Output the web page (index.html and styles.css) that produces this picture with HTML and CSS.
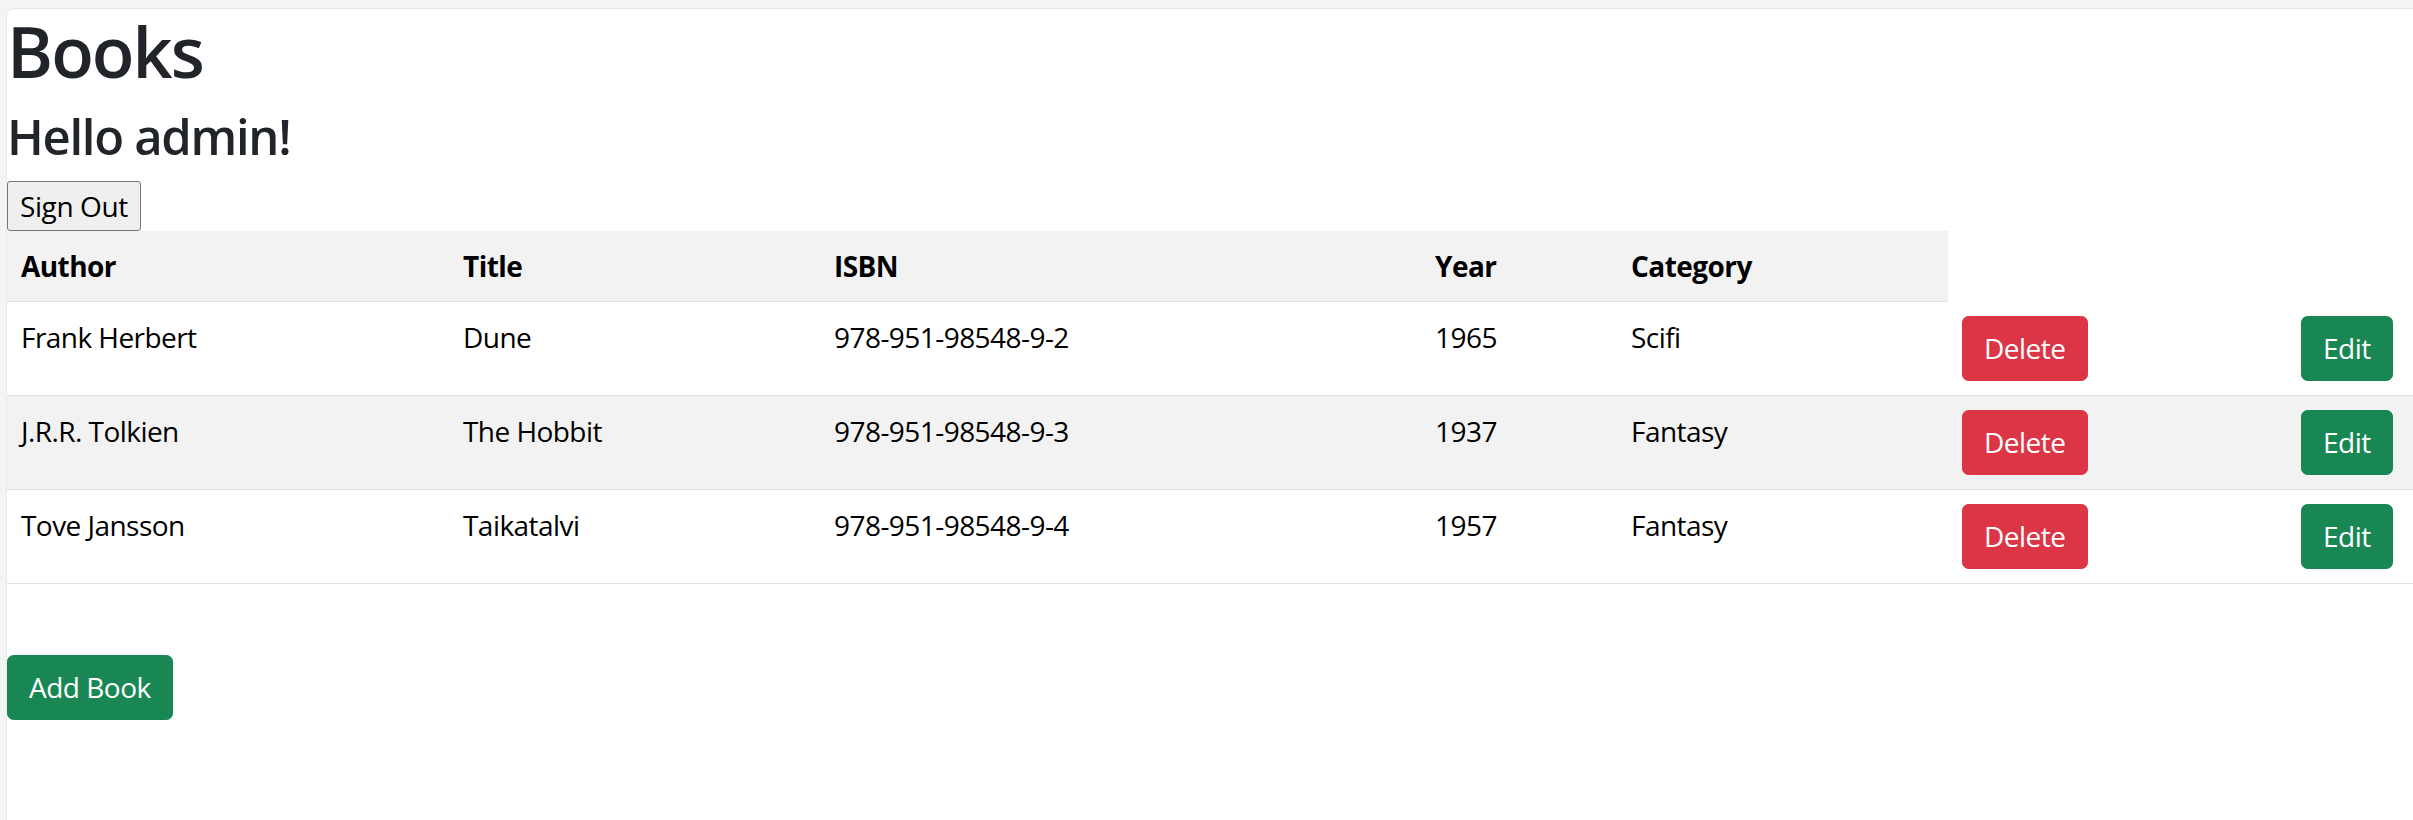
FILE: index.html
```html
<!DOCTYPE html>
<html lang="en">
<head>
<meta charset="utf-8">
<title>Books</title>
<link rel="stylesheet" href="styles.css">
</head>
<body>
<div class="window">
  <main class="page">
    <h1 class="title">Books</h1>
    <h3 class="greeting">Hello admin!</h3>
    <button class="signout">Sign Out</button>
    <table class="books">
      <colgroup>
        <col class="c-author">
        <col class="c-title">
        <col class="c-isbn">
        <col class="c-year">
        <col class="c-category">
        <col class="c-delete">
        <col class="c-edit">
      </colgroup>
      <tr class="head-row">
        <th>Author</th>
        <th>Title</th>
        <th>ISBN</th>
        <th>Year</th>
        <th>Category</th>
      </tr>
      <tr>
        <td>Frank Herbert</td>
        <td>Dune</td>
        <td>978-951-98548-9-2</td>
        <td>1965</td>
        <td>Scifi</td>
        <td><button class="btn btn-danger">Delete</button></td>
        <td><button class="btn btn-success">Edit</button></td>
      </tr>
      <tr class="striped">
        <td>J.R.R. Tolkien</td>
        <td>The Hobbit</td>
        <td>978-951-98548-9-3</td>
        <td>1937</td>
        <td>Fantasy</td>
        <td><button class="btn btn-danger">Delete</button></td>
        <td><button class="btn btn-success">Edit</button></td>
      </tr>
      <tr>
        <td>Tove Jansson</td>
        <td>Taikatalvi</td>
        <td>978-951-98548-9-4</td>
        <td>1957</td>
        <td>Fantasy</td>
        <td><button class="btn btn-danger">Delete</button></td>
        <td><button class="btn btn-success">Edit</button></td>
      </tr>
    </table>
    <div class="actions">
      <button class="btn btn-success">Add Book</button>
    </div>
  </main>
</div>
</body>
</html>
```

FILE: styles.css
```css
html, body {
  margin: 0;
  height: 100%;
}

body {
  background: #f4f4f4;
  font-family: "Open Sans", "Noto Sans", "Liberation Sans", sans-serif;
  font-size: 28px;
  line-height: 1.5;
  letter-spacing: -0.55px;
  color: #212529;
}

.window {
  box-sizing: border-box;
  height: 100%;
  padding: 8px 0 0 6px;
}

.page {
  box-sizing: border-box;
  height: 100%;
  background: #ffffff;
  border-top: 1px solid #e6e6e6;
  border-left: 1px solid #ebebeb;
  border-top-left-radius: 8px;
}

.title {
  margin: 0 0 14px;
  font-size: 70px;
  font-weight: 600;
  line-height: 84px;
  letter-spacing: -2px;
}

.greeting {
  margin: 0 0 15px;
  font-size: 49px;
  font-weight: 600;
  line-height: 59px;
  letter-spacing: -1.3px;
}

.signout {
  display: block;
  box-sizing: border-box;
  height: 50px;
  margin: 0;
  font-family: inherit;
  font-size: 28px;
  line-height: 42px;
  letter-spacing: -0.4px;
  padding: 0 12px;
  color: #000;
  background: #efefef;
  border: 1px solid #767676;
  border-radius: 3px;
}

.books {
  width: 100%;
  border-collapse: collapse;
  table-layout: fixed;
  margin-bottom: 28px;
  color: #000;
}

.c-author { width: 442px; }
.c-title { width: 371px; }
.c-isbn { width: 601px; }
.c-year { width: 196px; }
.c-category { width: 331px; }
.c-delete { width: 339px; }
.c-edit { width: 126px; }

.books th,
.books td {
  padding: 14px;
  text-align: left;
  vertical-align: top;
  border-bottom: 1px solid #dee2e6;
  white-space: nowrap;
}

.books th {
  font-weight: 700;
}

.head-row,
.striped {
  background: #f2f2f2;
}

.btn {
  display: inline-block;
  margin: 0;
  font-family: inherit;
  font-size: 28px;
  line-height: 42px;
  letter-spacing: -0.5px;
  padding: 10.5px 21px;
  color: #fff;
  border: 1px solid transparent;
  border-radius: 6.5px;
}

.btn-danger {
  background: #dc3545;
  border-color: #dc3545;
}

.btn-success {
  background: #198754;
  border-color: #198754;
}

.actions {
  padding-top: 43px;
}
```
